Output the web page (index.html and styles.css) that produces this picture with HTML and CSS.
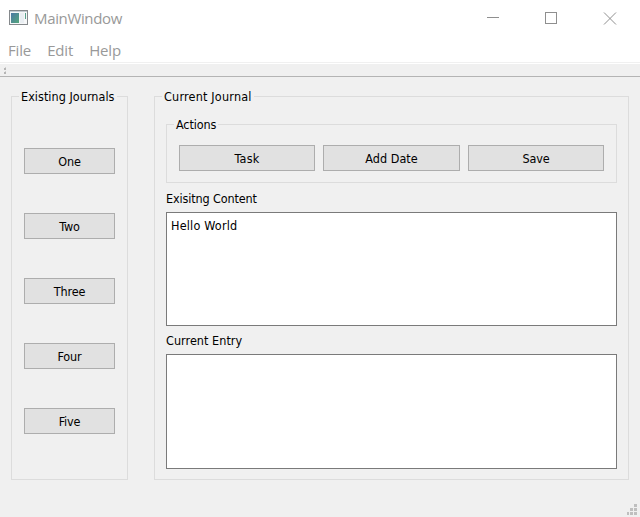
FILE: index.html
```html
<!DOCTYPE html>
<html lang="en">
<head>
<meta charset="utf-8">
<title>MainWindow</title>
<link rel="stylesheet" href="styles.css">
</head>
<body>
<div class="window">
  <header class="titlebar">
    <svg class="app-icon" width="20" height="16" viewBox="0 0 20 16">
      <defs><linearGradient id="pane" x1="0" y1="0" x2="1" y2="1"><stop offset="0" stop-color="#4c78a4"/><stop offset="1" stop-color="#54a77c"/></linearGradient></defs>
      <rect x=".5" y=".5" width="18" height="14" fill="#f6f7f8" stroke="#85898c"/>
      <path d="M1 1.5H18" stroke="#c3cbd1"/>
      <rect x="2" y="3" width="8" height="10" fill="url(#pane)"/>
      <rect x="11" y="3" width="4" height="10" fill="#e9eef2"/>
      <path d="M16 3h1v6h-1z" fill="#58a18c"/>
    </svg>
    <span class="caption">MainWindow</span>
    <svg class="controls" width="130" height="14" viewBox="0 0 130 14" fill="none" stroke="#8f8f8f" shape-rendering="crispEdges">
      <path d="M0 6.5h12"/>
      <rect x="58.5" y="1.5" width="11" height="11"/>
      <path d="M117 1.5l12 12M129 1.5l-12 12" shape-rendering="auto"/>
    </svg>
  </header>
  <nav class="menubar"><span>File</span><span>Edit</span><span>Help</span></nav>
  <div class="toolbar">
    <svg width="4" height="7" viewBox="0 0 4 7" shape-rendering="crispEdges"><path d="M0 1h2v2H0zM0 5h2v2H0z" fill="#b5b5b5"/><path d="M1 0h1v1H1zM1 4h1v1H1z" fill="#d0d0d0"/></svg>
  </div>
  <main class="content">
    <fieldset class="group journals">
      <legend class="wide">Existing Journals</legend>
      <div class="journal-list">
        <button>One</button>
        <button>Two</button>
        <button>Three</button>
        <button>Four</button>
        <button>Five</button>
      </div>
    </fieldset>
    <fieldset class="group current">
      <legend class="wider">Current Journal</legend>
      <div class="current-body">
        <fieldset class="group actions">
          <legend>Actions</legend>
          <div class="action-row">
            <button class="wider">Task</button>
            <button class="wide">Add Date</button>
            <button>Save</button>
          </div>
        </fieldset>
        <div class="label">Exisitng Content</div>
        <div class="textbox wider">Hello World</div>
        <div class="label wide">Current Entry</div>
        <div class="textbox entry"></div>
      </div>
    </fieldset>
  </main>
  <footer class="statusbar">
    <svg width="10" height="11" viewBox="0 0 10 11" fill="#bfbfbf" shape-rendering="crispEdges"><path d="M7 0h3v3H7zM3 4h3v3H3zM7 4h3v3H7zM0 8h2v3H0zM3 8h3v3H3zM7 8h3v3H7z"/></svg>
  </footer>
</div>
</body>
</html>
```

FILE: styles.css
```css
* { box-sizing: border-box; }

body {
  margin: 0;
  background: #f0f0f0;
  color: #000;
  font: 12.5px/15px "DejaVu Sans Condensed", "DejaVu Sans", sans-serif;
  font-stretch: condensed;
  letter-spacing: -0.13px;
}

.wide { letter-spacing: 0.04px; }
.wider { letter-spacing: 0.2px; }

.window { display: flex; flex-direction: column; height: 517px; overflow: hidden; }

.titlebar {
  display: flex;
  align-items: center;
  height: 36px;
  padding: 0 0 0 9px;
  background: #fff;
  color: #999;
  font: 15px/20px "Open Sans", sans-serif;
  letter-spacing: -0.35px;
}

.caption { margin-left: 5px; }
.controls { margin: 0 23px 0 auto; }

.menubar {
  display: flex;
  align-items: center;
  gap: 16px;
  height: 28px;
  padding: 0 8px 1px;
  background: linear-gradient(#f0f0f0, #f0f0f0) 0 26px / 100% 1px no-repeat #fff;
  color: #999;
  font: 15px/20px "Open Sans", sans-serif;
  letter-spacing: -0.15px;
}

.toolbar {
  display: flex;
  height: 13px;
  padding: 3px 0 0 4px;
  border-bottom: 1px solid #b4b4b4;
}

.content { display: flex; gap: 26px; padding: 12px 11px 0; }

.group { min-width: 0; margin: 0; padding: 0; border: 1px solid #dcdcdc; }
.group > legend { height: 15px; margin-left: 7px; padding: 0 2px; line-height: 15px; white-space: nowrap; }

.journals { width: 117px; height: 391px; }
.current { width: 475px; height: 391px; }

.journal-list { display: flex; flex-direction: column; gap: 39px; padding: 44px 12px 0; }
.current-body { padding: 13px 11px 0; }
.actions { height: 66px; }
.action-row { display: grid; grid-template-columns: 136px 137px 136px; gap: 8px; padding: 13px 12px 0; }

button {
  height: 26px;
  padding: 2px 0 0;
  border: 1px solid #adadad;
  border-radius: 0;
  background: #e1e1e1;
  color: #000;
  font-family: inherit;
  font-size: inherit;
  font-stretch: inherit;
  line-height: 16px;
}
button:not([class]) { letter-spacing: inherit; }

.label { height: 28px; padding-top: 7px; }
.actions + .label { height: 29px; padding-top: 8px; }
.textbox { height: 114px; padding: 5px 4px; border: 1px solid #7a7a7a; background: #fff; }
.entry { height: 115px; }

.statusbar { display: flex; justify-content: flex-end; margin-top: auto; padding: 0 3px 2px 0; }
```
